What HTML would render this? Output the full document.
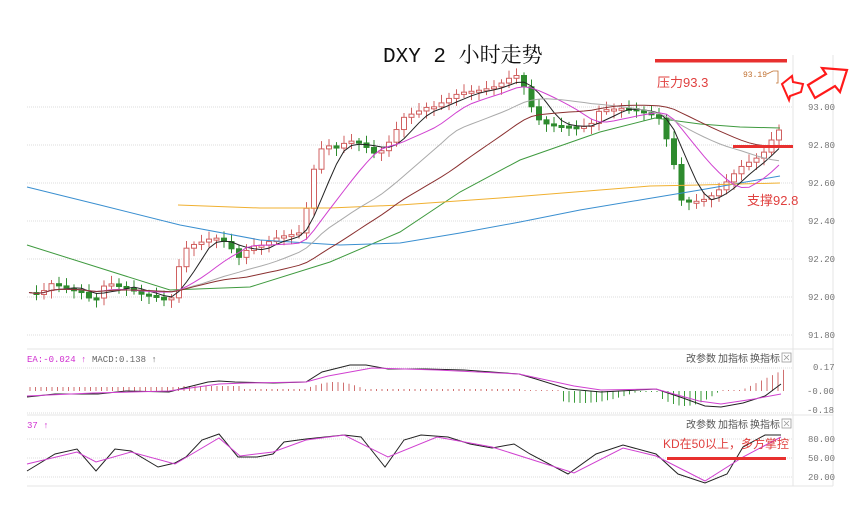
<!DOCTYPE html>
<html><head><meta charset="utf-8"><style>
html,body{margin:0;padding:0;background:#fff;width:858px;height:507px;overflow:hidden}
svg{display:block}
.ax{font:9px "Liberation Mono","DejaVu Sans Mono",monospace;fill:#777}
.hd{font:10px "Liberation Sans","Noto Sans CJK SC",sans-serif;fill:#555}
.rd{font:12px "Liberation Sans","Noto Sans CJK SC",sans-serif;fill:#e0403f}
</style></head><body>
<svg id="s" width="858" height="507" xmlns="http://www.w3.org/2000/svg">
<g stroke="#ddd" stroke-dasharray="1,1" stroke-width="1">
<line x1="27" y1="107" x2="792" y2="107"/><line x1="27" y1="145" x2="792" y2="145"/>
<line x1="27" y1="183" x2="792" y2="183"/><line x1="27" y1="221" x2="792" y2="221"/>
<line x1="27" y1="259" x2="792" y2="259"/><line x1="27" y1="297" x2="792" y2="297"/>
<line x1="27" y1="335" x2="792" y2="335"/>
<line x1="27" y1="368" x2="792" y2="368"/><line x1="27" y1="413" x2="792" y2="413"/>
<line x1="27" y1="439" x2="792" y2="439"/><line x1="27" y1="458" x2="792" y2="458"/><line x1="27" y1="477" x2="792" y2="477"/>
</g>
<g stroke="#e4e4e4" stroke-width="1" fill="none">
<line x1="27" y1="349" x2="833" y2="349"/><line x1="27" y1="415" x2="833" y2="415"/>
<line x1="27" y1="486" x2="833" y2="486"/>
<line x1="793" y1="55" x2="793" y2="486"/><line x1="833" y1="55" x2="833" y2="486"/>
</g>
<g id="hist"></g>
<g id="cand"></g>
<g fill="none" stroke-width="1">
<polyline stroke="#3f9a3f" points="27,245 100,268 170,290 250,287 330,262 400,232 460,192 520,160 600,132 655,118 700,124 740,127 780,128"/>
<polyline stroke="#3a8fd0" points="27,187 100,205 180,225 260,240 340,245 400,243 460,233 520,222 580,210 640,200 700,190 740,183 780,176"/>
<polyline stroke="#f0b030" points="178,205 260,208 330,208 400,205 500,198 600,190 650,186 700,185 780,183"/>
</g>
<g id="ma" fill="none" stroke-width="1"></g>
<g fill="none" stroke-width="1">
<polyline stroke="#222" points="27,397 55,394 93,394 98,394 126,391 169,392 180,389 208,382 219,381 235,382 273,383 306,382 322,372 350,365 366,365 388,369 426,369 464,370 519,374 536,379 568,389 601,392 656,389 683,398 705,406 721,407 743,403 765,396 781,384"/>
<polyline stroke="#d040d0" points="27,396 93,393 169,391 219,384 246,383 306,382 328,376 372,368 437,370 519,374 574,386 601,390 656,389 699,401 721,404 754,399 781,394"/>
<polyline stroke="#222" points="27,471 55,454 77,449 96,471 115,449 131,451 158,467 175,463 186,457 202,440 219,434 238,457 257,457 273,454 284,442 306,439 344,435 361,437 385,467 404,440 421,435 448,437 470,444 492,448 514,444 530,454 568,474 596,454 623,445 656,454 678,474 705,483 727,474 743,447 765,435 781,435"/>
<polyline stroke="#d040d0" points="27,464 77,452 96,462 131,452 175,464 219,438 240,456 273,452 306,440 344,435 388,457 437,437 492,447 574,473 623,448 656,456 705,481 743,457 781,437"/>
</g>
<text x="383" y="62" style="font:21px 'Liberation Mono','Noto Serif CJK SC',serif" fill="#111">DXY 2 <tspan style="font-family:'Noto Serif CJK SC',serif">小时走势</tspan></text>
<rect x="655" y="59" width="132" height="3.5" fill="#e8302f"/>
<text x="657" y="87" class="rd" style="font-size:13px">压力93.3</text>
<text x="743" y="77" style="font:8px 'Liberation Mono',monospace" fill="#c07030">93.19</text>
<polyline points="767,74 773,71 778,71 778,83 776,83" fill="none" stroke="#c07030" stroke-width="0.8"/>
<path d="M782,84 L792,76 L793,82 L803,84 L801,92 L790,96 L789,100 Z" fill="none" stroke="#ff1a1a" stroke-width="2"/>
<path d="M808,85 L826,74 L822,68 L847,70 L840,92 L835,86 L815,98 Z" fill="none" stroke="#ff1a1a" stroke-width="2.2"/>
<rect x="733" y="145" width="60" height="3" fill="#e8302f"/>
<text x="747" y="205" class="rd" style="font-size:13px">支撑92.8</text>
<text x="663" y="448" class="rd">KD在50以上，多方掌控</text>
<rect x="667" y="457" width="119" height="3" fill="#e8302f"/>
<g class="ax">
<text x="808" y="110">93.00</text><text x="808" y="148">92.80</text><text x="808" y="186">92.60</text>
<text x="808" y="224">92.40</text><text x="808" y="262">92.20</text><text x="808" y="300">92.00</text>
<text x="808" y="338">91.80</text>
<text x="813" y="370">0.17</text><text x="807" y="394">-0.00</text><text x="807" y="413">-0.18</text>
<text x="808" y="442">80.00</text><text x="808" y="461">50.00</text><text x="808" y="480">20.00</text>
</g>
<text x="27" y="362" style="font:9px 'Liberation Mono',monospace" fill="#d030d0">EA:-0.024 ↑</text>
<text x="92" y="362" style="font:9px 'Liberation Mono',monospace" fill="#666">MACD:0.138 ↑</text>
<text x="27" y="428" style="font:9px 'Liberation Mono',monospace" fill="#d030d0">37 ↑</text>
<g class="hd">
<text x="686" y="362">改参数</text><text x="718" y="362">加指标</text><text x="750" y="362">换指标</text>
<text x="686" y="428">改参数</text><text x="718" y="428">加指标</text><text x="750" y="428">换指标</text>
</g>
<g fill="none" stroke="#999" stroke-width="0.8">
<rect x="782" y="353" width="9" height="9"/><path d="M784,355 L789,360 M789,355 L784,360"/>
<rect x="782" y="419" width="9" height="9"/><path d="M784,421 L789,426 M789,421 L784,426"/>
</g>
</svg>
<script>
var P=[[30,296],[40,298],[50,285],[60,287],[70,290],[80,290],[95,300],[100,285],[110,280],[120,283],[130,285],[140,290],[150,292],[160,295],[170,300],[175,285],[182,250],[190,245],[200,243],[210,240],[220,240],[230,250],[240,262],[250,250],[260,250],[270,245],[280,240],[290,238],[300,235],[305,218],[315,165],[320,150],[330,145],[340,148],[345,140],[355,138],[365,143],[375,150],[385,145],[395,128],[405,112],[415,110],[425,105],[435,105],[445,100],[455,95],[465,93],[475,93],[485,92],[495,90],[505,85],[515,78],[522,85],[530,108],[540,125],[550,128],[560,128],[570,128],[580,127],[590,125],[600,108],[610,107],[620,105],[630,105],[640,108],[650,110],[660,115],[668,140],[675,165],[682,200],[690,200],[700,200],[710,197],[720,190],[730,180],[740,170],[750,165],[760,160],[770,150],[775,130],[780,135]];
function interp(x){for(var i=1;i<P.length;i++){if(x<=P[i][0]){var a=P[i-1],b=P[i];return a[1]+(b[1]-a[1])*(x-a[0])/(b[0]-a[0]);}}return P[P.length-1][1];}
var xs=[],cs=[];for(var x=29;x<=781;x+=7.5){xs.push(x);cs.push(interp(x)+Math.sin(x*1.7)*4);}
var g=document.getElementById('cand'),h='';
for(var i=1;i<xs.length;i++){var o=cs[i-1],c=cs[i],up=c<o,t=Math.min(o,c),b=Math.max(o,c);if(b-t<2){b=t+2;}
var col=up?'#d06060':'#2e8b2e';
h+='<line x1="'+xs[i]+'" y1="'+(t-3-Math.abs(Math.sin(i))*5)+'" x2="'+xs[i]+'" y2="'+(b+3+Math.abs(Math.cos(i))*5)+'" stroke="'+col+'"/>';
h+='<rect x="'+(xs[i]-2.5)+'" y="'+t+'" width="5" height="'+(b-t)+'" fill="'+(up?'#fff':col)+'" stroke="'+col+'" stroke-width="1"/>';}
g.innerHTML=h;
function ma(n,col){var pts=[];for(var i=0;i<cs.length;i++){var s=0,k=0;for(var j=Math.max(0,i-n+1);j<=i;j++){s+=cs[j];k++;}pts.push(xs[i].toFixed(1)+','+(s/k).toFixed(1));}return '<polyline stroke="'+col+'" points="'+pts.join(' ')+'"/>';}
document.getElementById('ma').innerHTML=ma(5,'#222')+ma(10,'#d040d0')+ma(20,'#aaa')+ma(30,'#8a3030');
var hh='';for(var x=30;x<=785;x+=5.5){var v=0;
if(x<180)v=4;else if(x<240)v=5;else if(x<300)v=2;else if(x<370)v=9*Math.sin((x-300)/70*Math.PI);else if(x<525)v=2;else if(x<560)v=1;else if(x<640)v=-12*Math.sin((x-525)/115*Math.PI);else if(x<660)v=-1;else if(x<720)v=-15*Math.sin((x-650)/70*Math.PI);else if(x<740)v=1;else v=(x-740)/45*22;
if(Math.abs(v)<0.8)continue;hh+='<line x1="'+x+'" y1="391" x2="'+x+'" y2="'+(391-v)+'" stroke="'+(v>0?'#d07070':'#3a9a3a')+'"/>';}
document.getElementById('hist').innerHTML=hh;
</script>
</body></html>
